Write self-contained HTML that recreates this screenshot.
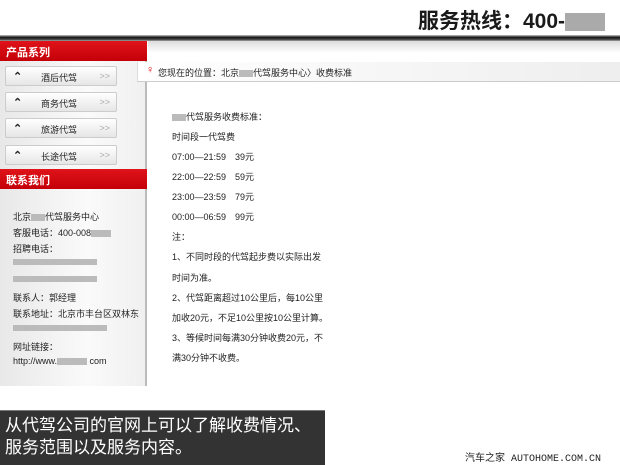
<!DOCTYPE html>
<html><head><meta charset="utf-8"><style>
*{margin:0;padding:0;box-sizing:border-box}
body{width:620px;height:465px;position:relative;overflow:hidden;background:#fff;font-family:"Liberation Sans","Noto Sans CJK SC",sans-serif;color:#222}
.a{position:absolute}
.hot{left:418px;top:5px;font-size:21px;font-weight:bold;color:#1a1a1a;white-space:nowrap}
.bar{left:0;top:35px;width:620px;height:6px;background:linear-gradient(#ccc,#111 40%,#555 80%,#aaa)}
.grad{left:148px;top:41px;width:472px;height:12px;background:linear-gradient(#ddd,#fff)}
.side{left:0;top:41px;width:147px;height:345px;background:linear-gradient(90deg,#e8e8e8,#fafafa 60%,#f0f0f0);border-right:2px solid #bbb}
.red{left:0;width:147px;height:20px;background:linear-gradient(#e0141a,#c40008);color:#fff;font-size:11px;font-weight:bold;padding:3px 6px}
.item{left:5px;width:112px;height:20px;background:linear-gradient(#fff,#e6e6e6);border:1px solid #ccc;border-radius:2px;font-size:9px;padding-top:4px}
.item b{position:absolute;left:7px;top:3px;font-size:11px}
.item span{position:absolute;left:35px}
.item i{position:absolute;right:6px;font-style:normal;color:#aaa}
.crumb{left:137px;top:62px;width:483px;height:20px;background:linear-gradient(90deg,#fff,#eee);border-bottom:1px solid #ccc;border-left:1px solid #ddd;font-size:9px;padding:4px 20px}
.t{font-size:9px;white-space:nowrap;color:#222}
.blur{display:inline-block;background:#bbb;height:7px;vertical-align:middle}
.cap{left:0;top:410px;width:325px;height:55px;background:#333;border-top:1px solid #777;color:#fff;font-size:17px;line-height:22px;padding:4px 5px;white-space:nowrap}
.mark{left:465px;top:449px;font-size:10px;color:#222;font-family:"Liberation Mono","Noto Sans CJK SC",monospace}
</style></head><body>
<div class="a hot">服务热线：400-<span class="blur" style="height:18px;width:40px;background:#aaa"></span></div>
<div class="a bar"></div>
<div class="a grad"></div>
<div class="a side"></div>
<div class="a red" style="top:41px">产品系列</div>
<div class="a item" style="top:66px"><b>⌃</b><span>酒后代驾</span><i>&gt;&gt;</i></div>
<div class="a item" style="top:92px"><b>⌃</b><span>商务代驾</span><i>&gt;&gt;</i></div>
<div class="a item" style="top:118px"><b>⌃</b><span>旅游代驾</span><i>&gt;&gt;</i></div>
<div class="a item" style="top:145px"><b>⌃</b><span>长途代驾</span><i>&gt;&gt;</i></div>
<div class="a red" style="top:169px">联系我们</div>
<div class="a t" style="left:13px;top:210px">北京<span class="blur" style="width:14px"></span>代驾服务中心</div>
<div class="a t" style="left:13px;top:226px">客服电话：400-008<span class="blur" style="width:20px"></span></div>
<div class="a t" style="left:13px;top:242px">招聘电话：</div>
<div class="a blur" style="left:13px;top:259px;width:84px;height:6px"></div>
<div class="a blur" style="left:13px;top:276px;width:84px;height:6px"></div>
<div class="a t" style="left:13px;top:291px">联系人：郭经理</div>
<div class="a t" style="left:13px;top:307px">联系地址：北京市丰台区双林东</div>
<div class="a blur" style="left:13px;top:325px;width:94px;height:6px"></div>
<div class="a t" style="left:13px;top:340px">网址链接：</div>
<div class="a t" style="left:13px;top:356px">http://www.<span class="blur" style="width:30px"></span> com</div>
<div class="a crumb"><span style="color:#d00;position:absolute;left:8px;top:2px;font-size:11px">♀</span>您现在的位置：北京<span class="blur" style="width:14px"></span>代驾服务中心〉收费标准</div>
<div class="a t" style="left:172px;top:110px"><span class="blur" style="width:14px"></span>代驾服务收费标准：</div>
<div class="a t" style="left:172px;top:130px">时间段一代驾费</div>
<div class="a t" style="left:172px;top:150px">07:00—21:59　39元</div>
<div class="a t" style="left:172px;top:170px">22:00—22:59　59元</div>
<div class="a t" style="left:172px;top:190px">23:00—23:59　79元</div>
<div class="a t" style="left:172px;top:210px">00:00—06:59　99元</div>
<div class="a t" style="left:172px;top:230px">注：</div>
<div class="a t" style="left:172px;top:250px">1、不同时段的代驾起步费以实际出发</div>
<div class="a t" style="left:172px;top:271px">时间为准。</div>
<div class="a t" style="left:172px;top:291px">2、代驾距离超过10公里后，每10公里</div>
<div class="a t" style="left:172px;top:311px">加收20元，不足10公里按10公里计算。</div>
<div class="a t" style="left:172px;top:331px">3、等候时间每满30分钟收费20元，不</div>
<div class="a t" style="left:172px;top:351px">满30分钟不收费。</div>
<div class="a cap">从代驾公司的官网上可以了解收费情况、<br>服务范围以及服务内容。</div>
<div class="a mark">汽车之家 AUTOHOME.COM.CN</div>
</body></html>
